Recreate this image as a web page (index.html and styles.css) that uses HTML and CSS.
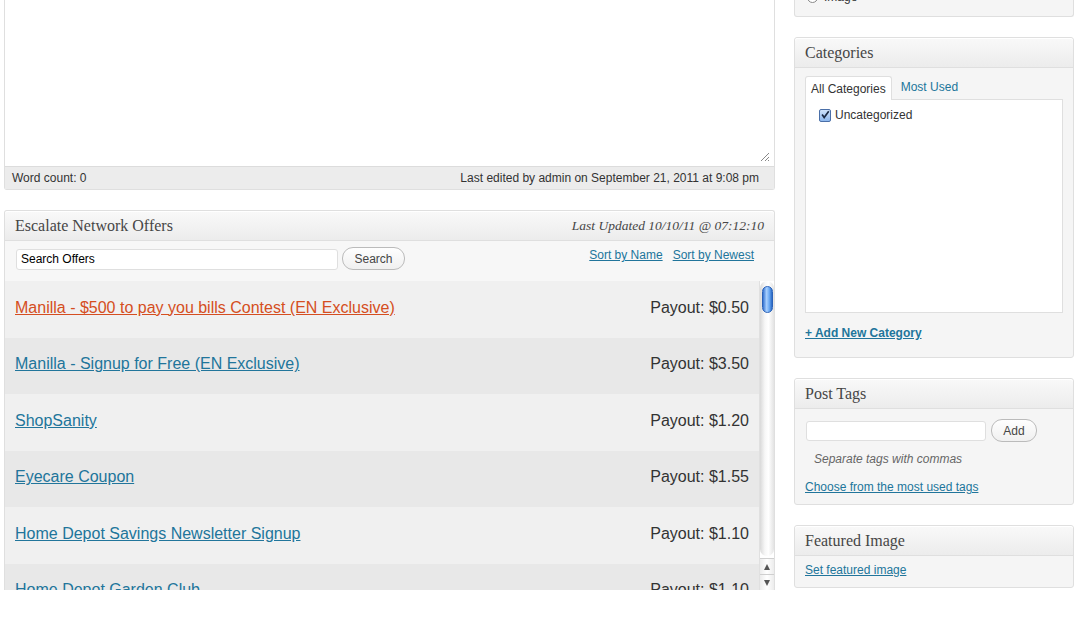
FILE: index.html
```html
<!DOCTYPE html>
<html>
<head>
<meta charset="utf-8">
<link rel="stylesheet" href="styles.css">
</head>
<body>
<div class="page">
  <div class="main">
    <div class="editor">
      <div class="editor-area">
        <svg class="grip" width="12" height="12" viewBox="0 0 12 12"><path d="M11 3 L3 11 M11 7 L7 11 M11 10 L10 11" stroke="#888" stroke-width="1" fill="none"/></svg>
      </div>
      <div class="status">
        <span>Word count: 0</span>
        <span>Last edited by admin on September 21, 2011 at 9:08 pm</span>
      </div>
    </div>

    <div class="postbox offers">
      <div class="hndle">
        <h3>Escalate Network Offers</h3>
        <span class="updated">Last Updated 10/10/11 @ 07:12:10</span>
      </div>
      <div class="search-row">
        <div class="search-left">
          <input class="search-input" type="text" value="Search Offers">
          <button class="btn btn-search">Search</button>
        </div>
        <div class="sorts">
          <a href="#">Sort by Name</a>
          <a href="#">Sort by Newest</a>
        </div>
      </div>
      <div class="list">
        <div class="rows">
          <div class="row odd"><a class="hot" href="#">Manilla - $500 to pay you bills Contest (EN Exclusive)</a><span class="pay">Payout: $0.50</span></div>
          <div class="row even"><a href="#">Manilla - Signup for Free (EN Exclusive)</a><span class="pay">Payout: $3.50</span></div>
          <div class="row odd"><a href="#">ShopSanity</a><span class="pay">Payout: $1.20</span></div>
          <div class="row even"><a href="#">Eyecare Coupon</a><span class="pay">Payout: $1.55</span></div>
          <div class="row odd"><a href="#">Home Depot Savings Newsletter Signup</a><span class="pay">Payout: $1.10</span></div>
          <div class="row even"><a href="#">Home Depot Garden Club</a><span class="pay">Payout: $1.10</span></div>
        </div>
        <div class="scrollbar">
          <div class="track"><div class="thumb"></div></div>
          <div class="arrow"><span class="tri-up"></span></div>
          <div class="arrow"><span class="tri-down"></span></div>
        </div>
      </div>
    </div>
  </div>

  <div class="side">
    <div class="postbox format">
      <div class="format-inner"><span class="radio"></span><span>Image</span></div>
    </div>

    <div class="postbox">
      <div class="hndle"><h3>Categories</h3></div>
      <div class="inside cats">
        <div class="tabs">
          <span class="tab active">All Categories</span>
          <a class="tab" href="#">Most Used</a>
        </div>
        <div class="cat-panel">
          <label class="cat-item">
            <span class="check"><svg width="12" height="12" viewBox="0 0 12 12"><path d="M2.5 5.5 L5 9 L10.5 1.5" stroke="#1a2a44" stroke-width="2" fill="none"/></svg></span>
            Uncategorized
          </label>
        </div>
        <a class="add-cat" href="#">+ Add New Category</a>
      </div>
    </div>

    <div class="postbox">
      <div class="hndle"><h3>Post Tags</h3></div>
      <div class="inside tags">
        <div class="tag-row">
          <input class="tag-input" type="text">
          <button class="btn btn-add">Add</button>
        </div>
        <p class="howto">Separate tags with commas</p>
        <a class="small-link" href="#">Choose from the most used tags</a>
      </div>
    </div>

    <div class="postbox">
      <div class="hndle"><h3>Featured Image</h3></div>
      <div class="inside feat">
        <a class="small-link" href="#">Set featured image</a>
      </div>
    </div>
  </div>
</div>
</body>
</html>
```

FILE: styles.css
```css
* { box-sizing: border-box; }
html, body { margin: 0; padding: 0; background: #fff; }
body {
  font-family: "Liberation Sans", Arial, sans-serif;
  font-size: 12px;
  color: #333;
}
a { color: #21759b; }

.page {
  display: flex;
  gap: 19px;
  padding-left: 4px;
  align-items: flex-start;
}
.main {
  width: 771px;
  display: flex;
  flex-direction: column;
  gap: 20px;
}
.side {
  width: 280px;
  display: flex;
  flex-direction: column;
  gap: 20px;
}

/* editor */
.editor {
  border: 1px solid #dfdfdf;
  border-top: none;
  border-radius: 0 0 3px 3px;
  height: 190px;
  display: flex;
  flex-direction: column;
}
.editor-area {
  height: 166px;
  background: #fff;
  display: flex;
  align-items: flex-end;
  justify-content: flex-end;
  padding: 0 4px 4px 0;
}
.status {
  height: 23px;
  border-top: 1px solid #dcdcdc;
  background: #ececec;
  display: flex;
  justify-content: space-between;
  align-items: center;
  padding: 0 15px 0 7px;
  color: #333;
  font-size: 12px;
}

/* postbox */
.postbox {
  border: 1px solid #dfdfdf;
  border-radius: 3px;
  background: #f5f5f5;
}
.hndle {
  height: 30px;
  border-bottom: 1px solid #dfdfdf;
  background: linear-gradient(to bottom, #f9f9f9, #ececec);
  display: flex;
  justify-content: space-between;
  align-items: center;
  padding: 0 10px;
  border-radius: 3px 3px 0 0;
  box-shadow: inset 0 1px 0 #fff;
}
.hndle h3 {
  margin: 0;
  font-family: "Liberation Serif", Georgia, serif;
  font-weight: normal;
  font-size: 16px;
  color: #464646;
}
.updated {
  font-family: "Liberation Serif", Georgia, serif;
  font-style: italic;
  font-size: 13.5px;
  color: #464646;
}

/* offers */
.offers {
  border-bottom: none;
  border-radius: 3px 3px 0 0;
}
.search-row {
  height: 40px;
  background: #f7f7f7;
  display: flex;
  justify-content: space-between;
  align-items: flex-start;
  padding: 6px 20px 0 11px;
}
.search-left {
  display: flex;
  align-items: center;
  gap: 4px;
}
.search-input {
  width: 322px;
  height: 21px;
  margin: 1px 0 0 0;
  border: 1px solid #dfdfdf;
  border-radius: 3px;
  background: #fff;
  font-family: "Liberation Sans", Arial, sans-serif;
  font-size: 12px;
  color: #000;
  padding: 0 4px;
  outline: none;
}
.btn {
  border: 1px solid #bbb;
  border-radius: 11px;
  background: linear-gradient(to bottom, #fefefe, #f0f0f0);
  font-family: "Liberation Sans", Arial, sans-serif;
  font-size: 12px;
  color: #464646;
  padding: 0;
  height: 23px;
}
.btn-search { width: 63px; }
.sorts {
  display: flex;
  gap: 10px;
  padding-top: 1px;
}
.sorts a { font-size: 12px; }

.list {
  height: 309px;
  display: flex;
  overflow: hidden;
}
.rows {
  flex: 1;
  overflow: hidden;
}
.row {
  height: 56.5px;
  display: flex;
  justify-content: space-between;
  align-items: center;
  padding: 0 10px 3px 10px;
  font-size: 16px;
}
.row.odd { background: #f0f0f0; }
.row.even { background: #e8e8e8; }
.row a.hot { color: #d54e21; }
.pay { color: #333; }

.scrollbar {
  width: 15px;
  display: flex;
  flex-direction: column;
  background: #fff;
  border-left: 1px solid #e0e0e0;
}
.track {
  flex: 1;
  border-radius: 7px;
  background: linear-gradient(to right, #d9d9d9, #f7f7f7 35%, #ffffff 60%, #e3e3e3);
  padding-top: 5px;
  display: flex;
  justify-content: center;
  margin-bottom: 2px;
}
.thumb {
  width: 11px;
  height: 27px;
  border-radius: 6px;
  border: 1px solid #2b62b8;
  background: linear-gradient(to right, #3573d1, #a8d0ff 40%, #6aa8f2 70%, #2a68c4);
}
.arrow {
  height: 16px;
  border-top: 1px solid #cfcfcf;
  background: linear-gradient(to right, #ececec, #fff 50%, #ececec);
  display: flex;
  align-items: center;
  justify-content: center;
}
.tri-up {
  width: 0; height: 0;
  border-left: 3px solid transparent;
  border-right: 3px solid transparent;
  border-bottom: 6px solid #555;
}
.tri-down {
  width: 0; height: 0;
  border-left: 3px solid transparent;
  border-right: 3px solid transparent;
  border-top: 6px solid #555;
}

/* side */
.format {
  height: 17px;
  border-top: none;
  border-radius: 0 0 3px 3px;
  overflow: hidden;
}
.format-inner {
  display: flex;
  align-items: center;
  gap: 6px;
  margin: -10px 0 0 12px;
  font-size: 12px;
  color: #333;
}
.radio {
  width: 11px;
  height: 11px;
  border: 1px solid #888;
  border-radius: 50%;
  background: #fff;
}

.inside { padding: 0 10px; }
.cats { padding: 7px 10px 16px 10px; }
.tabs {
  display: flex;
  align-items: flex-end;
  height: 24px;
}
.tab {
  height: 24px;
  display: flex;
  align-items: center;
  padding: 0 5px;
  font-size: 12px;
  text-decoration: none;
}
.tab.active {
  background: #fff;
  border: 1px solid #dfdfdf;
  border-bottom: none;
  border-radius: 3px 3px 0 0;
  color: #333;
  margin-bottom: -1px;
  position: relative;
  z-index: 1;
}
a.tab { margin-left: 4px; color: #21759b; }
.cat-panel {
  height: 214px;
  width: 258px;
  border: 1px solid #dfdfdf;
  background: #fff;
  padding: 8px 0 0 13px;
}
.cat-item {
  display: flex;
  align-items: center;
  gap: 4px;
  font-size: 12px;
  color: #333;
}
.check {
  width: 12px;
  height: 13px;
  border: 1px solid #4a6fa8;
  border-radius: 2px;
  background: linear-gradient(to bottom, #cfe3fb, #8db8ee);
  display: flex;
  align-items: center;
  justify-content: center;
}
.add-cat {
  display: block;
  margin-top: 13px;
  font-weight: bold;
  font-size: 12px;
  line-height: 15px;
}

.tags { padding: 10px 10px 9px 10px; }
.tag-row {
  display: flex;
  align-items: center;
  gap: 5px;
}
.tag-input {
  width: 180px;
  height: 20px;
  margin: 0 0 0 1px;
  border: 1px solid #dfdfdf;
  border-radius: 3px;
  background: #fff;
  outline: none;
}
.btn-add { width: 46px; }
.howto {
  margin: 10px 0 0 9px;
  font-style: italic;
  color: #666;
  font-size: 12px;
  line-height: 15px;
}
.small-link {
  display: block;
  font-size: 12px;
  line-height: 15px;
}
.tags .small-link { margin-top: 13px; }
.feat { padding: 7px 10px 9px 10px; }
```
